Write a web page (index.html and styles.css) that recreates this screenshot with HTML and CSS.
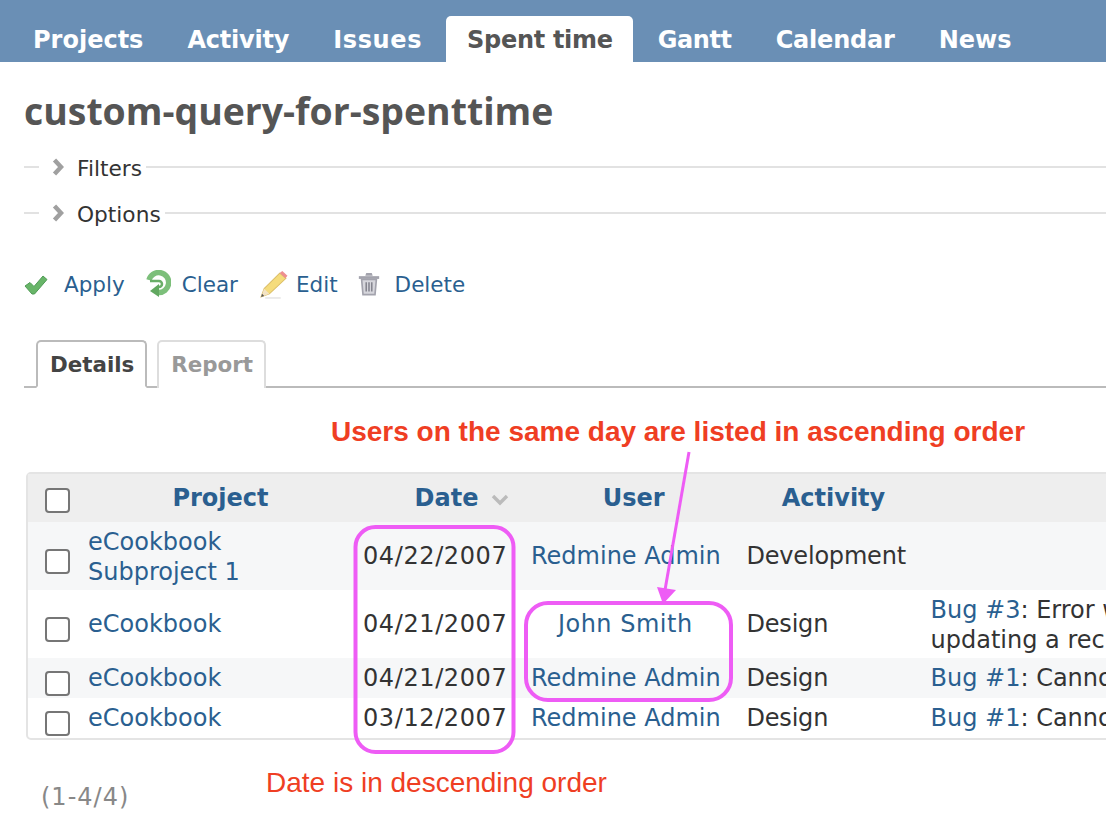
FILE: index.html
```html
<!DOCTYPE html>
<html lang="en">
<head>
<meta charset="utf-8">
<title>custom-query-for-spenttime</title>
<link rel="stylesheet" href="styles.css">
</head>
<body>
<nav class="topnav">
  <a href="#">Projects</a>
  <a href="#" class="narrow">Activity</a>
  <a href="#" class="wide">Issues</a>
  <a href="#" class="selected">Spent time</a>
  <a href="#" class="narrower">Gantt</a>
  <a href="#" class="narrow">Calendar</a>
  <a href="#">News</a>
</nav>
<main class="content">
  <h2 class="title">custom-query-for-spenttime</h2>

  <div class="legend">
    <span class="dash"></span>
    <svg class="chev" viewBox="0 0 12 18"><path d="M2.500 2l6.500 7-6.500 7" fill="none" stroke="#a0a0a0" stroke-width="4.400"/></svg>
    <span class="legend-text">Filters</span>
    <span class="rule"></span>
  </div>
  <div class="legend">
    <span class="dash"></span>
    <svg class="chev" viewBox="0 0 12 18"><path d="M2.500 2l6.500 7-6.500 7" fill="none" stroke="#a0a0a0" stroke-width="4.400"/></svg>
    <span class="legend-text">Options</span>
    <span class="rule"></span>
  </div>

  <div class="actions">
    <a href="#" class="act act-apply">
      <svg viewBox="0 0 24 22" class="ico ico-apply"><path d="M1 12l5-3.500 4 4L19 2l4 3.500L10.500 20H8z" fill="#68b568" stroke="#4f9a55" stroke-width="1"/></svg>
      <span>Apply</span>
    </a>
    <a href="#" class="act act-clear">
      <svg viewBox="0 0 26 28" class="ico ico-clear"><path d="M4 10A10 10 0 1 1 13 22.500" fill="none" stroke="#7cbf7a" stroke-width="5.500"/><path d="M5 11h9a3 3 0 0 1 0 6" fill="none" stroke="#6aae68" stroke-width="2.500"/><path d="M5 21l9-7v13z" fill="#62a860"/></svg>
      <span>Clear</span>
    </a>
    <a href="#" class="act act-edit">
      <svg viewBox="0 0 28 28" class="ico ico-edit"><path d="M2 26l3-8L20 3l6 5L10 23z" fill="#f5dc7c" stroke="#dcbf68" stroke-width="1"/><path d="M20 3l2.500-2 5 4.500L25.500 8z" fill="#ee8f8f"/><path d="M2 26l3-8 5 5z" fill="#f3e3c4"/><path d="M2 26l1-3 2 2z" fill="#555"/><path d="M6 27h15" stroke="#e6e6e6" stroke-width="1.500"/></svg>
      <span>Edit</span>
    </a>
    <a href="#" class="act act-delete">
      <svg viewBox="0 0 24 26" class="ico ico-del"><path d="M1 6h22" stroke="#a3a3ad" stroke-width="3"/><path d="M8 4l1-3h6l1 3" fill="#a3a3ad"/><path d="M4 8h16l-1.500 16.500h-13z" fill="#d6d6dc" stroke="#a3a3ad" stroke-width="1.800"/><path d="M9 11v10M12 11v10M15 11v10" stroke="#85858f" stroke-width="1.700"/></svg>
      <span>Delete</span>
    </a>
  </div>

  <div class="tabs">
    <a href="#" class="tab active">Details</a>
    <a href="#" class="tab">Report</a>
  </div>

  <div class="table-box">
    <table class="list">
      <colgroup>
        <col class="c-check"><col class="c-project"><col class="c-date"><col class="c-user"><col class="c-activity"><col class="c-issue">
      </colgroup>
      <thead>
        <tr>
          <th class="check"><input type="checkbox"></th>
          <th><a href="#">Project</a></th>
          <th class="date-h"><a href="#">Date</a><svg class="sort" viewBox="0 0 18 12"><path d="M2 2l7 7 7-7" fill="none" stroke="#bbb" stroke-width="3.400"/></svg></th>
          <th><a href="#">User</a></th>
          <th><a href="#">Activity</a></th>
          <th class="issue-h"><a href="#">Issue</a></th>
        </tr>
      </thead>
      <tbody>
        <tr class="odd r1">
          <td class="check"><input type="checkbox"></td>
          <td class="two-lines"><a href="#">eCookbook<br>Subproject 1</a></td>
          <td class="date">04/22/2007</td>
          <td class="user"><a href="#">Redmine Admin</a></td>
          <td class="activity">Development</td>
          <td></td>
        </tr>
        <tr class="r2">
          <td class="check"><input type="checkbox"></td>
          <td><a href="#">eCookbook</a></td>
          <td class="date">04/21/2007</td>
          <td class="user user-wide"><a href="#">John Smith</a></td>
          <td class="activity">Design</td>
          <td class="two-lines"><a href="#">Bug #3</a>: Error when<br>updating a recipe</td>
        </tr>
        <tr class="odd r3">
          <td class="check"><input type="checkbox"></td>
          <td><a href="#">eCookbook</a></td>
          <td class="date">04/21/2007</td>
          <td class="user"><a href="#">Redmine Admin</a></td>
          <td class="activity">Design</td>
          <td><a href="#">Bug #1</a>: Cannot print recipes</td>
        </tr>
        <tr class="r3">
          <td class="check"><input type="checkbox"></td>
          <td><a href="#">eCookbook</a></td>
          <td class="date">03/12/2007</td>
          <td class="user"><a href="#">Redmine Admin</a></td>
          <td class="activity">Design</td>
          <td><a href="#">Bug #1</a>: Cannot print recipes</td>
        </tr>
      </tbody>
    </table>
  </div>

  <p class="pagination">(1-4/4)</p>
</main>

<svg class="marks" viewBox="0 0 1106 828" aria-hidden="true">
  <rect x="355.500" y="527" width="158" height="225" rx="20" fill="none" stroke="#ee5cf5" stroke-width="4"/>
  <rect x="526" y="603" width="205" height="97" rx="22" fill="none" stroke="#ee5cf5" stroke-width="4"/>
  <path d="M689 452L665 590" fill="none" stroke="#ee5cf5" stroke-width="3"/>
  <path d="M657 587L676 590L663 604z" fill="#ee5cf5"/>
</svg>
<p class="note note-users">Users on the same day are listed in ascending order</p>
<p class="note note-date">Date is in descending order</p>
</body>
</html>
```
FILE: styles.css
```css
* { box-sizing: border-box; }
html, body { margin: 0; height: 828px; overflow: hidden; background: #fff; }
body { position: relative; font-family: "DejaVu Sans", Verdana, sans-serif; font-size: 24px; color: #333; }
a { color: #2a5f90; text-decoration: none; }

.topnav { display: flex; align-items: flex-end; height: 62px; padding-left: 11px; background: #6a8fb5; }
.topnav a { display: block; height: 46px; padding: 0 22px; font-size: 24px; font-weight: 700; line-height: 48px; color: #fff; border-radius: 5px 5px 0 0; white-space: nowrap; }
.topnav a.narrow { letter-spacing: -.2px; }
.topnav a.narrower { letter-spacing: -.4px; }
.topnav a.wide { letter-spacing: .6px; }
.topnav a.selected { margin: 0 3px 0 2px; padding: 0 20px 0 21px; background: #fff; color: #555; letter-spacing: -.3px; }

.content { padding: 0 0 0 24px; }
.title { margin: 0; padding-top: 24px; height: 82px; font-family: "Open Sans", sans-serif; font-size: 37.400px; line-height: 50px; font-weight: 700; color: #555; white-space: nowrap; }

.legend { display: flex; align-items: center; height: 46px; }
.dash { width: 15px; height: 2px; background: #e2e2e2; }
.chev { width: 12px; height: 18px; margin: 0 13px 0 13px; filter: blur(.4px); }
.legend-text { padding-top: 2px; font-size: 21.700px; color: #333; }
.rule { flex: 1; height: 2px; margin-left: 4px; background: #e2e2e2; }

.actions { display: flex; align-items: center; height: 48px; margin-top: 24px; font-size: 21.500px; }
.act { display: flex; align-items: center; }
.ico { width: 24px; height: 24px; margin-right: 16px; filter: blur(.4px); }
.ico-apply { height: 22px; margin-top: 2px; }
.act-clear { margin-left: 20px; }
.act-edit { margin-left: 21px; }
.act-delete { margin-left: 19px; }
.ico-clear { width: 26px; height: 28px; margin-right: 11px; }
.ico-edit { width: 29px; height: 29px; margin-right: 8px; }
.ico-del { margin-right: 14px; }

.tabs { display: flex; align-items: flex-end; gap: 10px; height: 48px; margin-top: 32px; padding-left: 12px; border-bottom: 2px solid #bbb; }
.tab { display: block; height: 48px; padding: 0 11px 0 12px; margin-bottom: -2px; font-size: 21.400px; font-weight: 700; line-height: 46px; color: #999; border: 2px solid #ddd; border-bottom: 0; border-radius: 5px 5px 0 0; background: #fff; }
.tab.active { color: #444; border-color: #bbb; border-bottom: 2px solid #fff; }

.table-box { width: 1400px; margin: 84px 0 0 2px; border: 2px solid #e4e4e4; border-radius: 5px; }
.list { width: 100%; border-collapse: collapse; table-layout: fixed; }
.c-check { width: 52px; }
.c-project { width: 275px; }
.c-date { width: 168px; }
.c-user { width: 215.500px; }
.c-activity { width: 184px; }
.list thead tr { height: 48px; background: #eee; }
.list th { padding: 0 8px 0 14px; font-size: 24px; font-weight: 700; text-align: center; white-space: nowrap; }
.list td { padding: 0 8px; line-height: 30px; white-space: nowrap; vertical-align: middle; }
.list tr.r1, .list tr.r2 { height: 68px; }
.list tr.r3 { height: 40px; }
.list tr.odd { background: #f6f7f8; }
.list .check { padding: 10px 0 0 17px; text-align: left; }
.list th.check { padding-top: 4px; }
.list .two-lines { padding-top: 2px; }
.list .date { padding-right: 17px; color: #333; letter-spacing: .6px; }
.list .activity { letter-spacing: -.2px; }
.list .date-h { padding: 0 4px 0 50px; }
.list .user { padding-right: 19px; text-align: center; }
.list .user-wide { letter-spacing: .5px; }
.sort { width: 18px; height: 12px; margin-left: 13px; }
input[type="checkbox"] { appearance: none; display: block; width: 25px; height: 25px; margin: 0; background: #fff; border: 2px solid #767676; border-radius: 4px; }

.pagination { margin: 42px 0 0 17px; font-size: 24px; letter-spacing: 1px; line-height: 30px; color: #888; }

.marks { position: absolute; left: 0; top: 0; width: 1106px; height: 828px; pointer-events: none; }
.note { position: absolute; margin: 0; font-family: "Liberation Sans", Arial, sans-serif; color: #ef3e23; white-space: nowrap; }
.note-users { left: 331px; top: 417px; font-size: 28px; line-height: 30px; font-weight: 700; }
.note-date { left: 266px; top: 768px; font-size: 28px; line-height: 30px; }
```
